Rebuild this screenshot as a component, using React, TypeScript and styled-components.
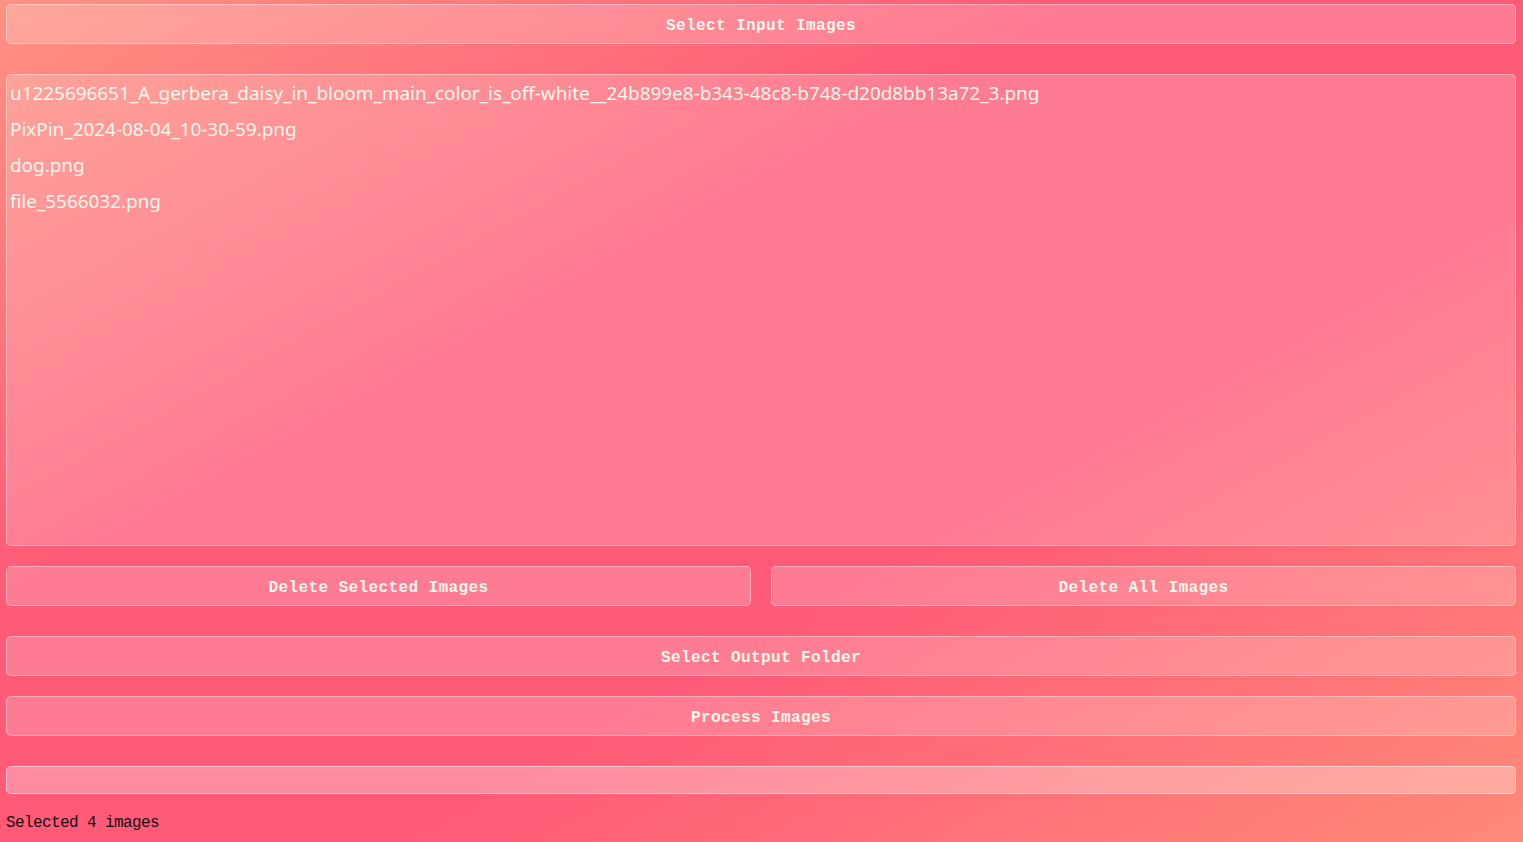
import React from "react";
import styled, { createGlobalStyle } from "styled-components";

const GlobalStyle = createGlobalStyle`
  html, body {
    margin: 0;
    padding: 0;
    height: 100%;
  }
  body {
    background: linear-gradient(
      to bottom right,
      #ff9282 0%,
      #ff5a78 36%,
      #ff5a78 62%,
      #ff8a78 100%
    );
    background-attachment: fixed;
    min-height: 842px;
    overflow: hidden;
  }
`;

const Page = styled.div`
  display: flex;
  flex-direction: column;
  padding: 4px 7px 0 6px;
  height: 842px;
  box-sizing: border-box;
`;

const Glass = `
  background: rgba(255, 255, 255, 0.2);
  border: 1px solid rgba(255, 255, 255, 0.38);
  border-radius: 5px;
  box-sizing: border-box;
`;

const ActionButton = styled.button<{ $mt?: number }>`
  ${Glass}
  height: 40px;
  width: 100%;
  margin-top: ${(p) => p.$mt ?? 0}px;
  display: flex;
  align-items: center;
  justify-content: center;
  padding: 3px 0 0 0;
  font-family: "Liberation Mono", "DejaVu Sans Mono", monospace;
  font-weight: bold;
  font-size: 16px;
  letter-spacing: 0.4px;
  color: #fff8ec;
  cursor: pointer;
`;

const ButtonRow = styled.div`
  display: grid;
  grid-template-columns: 1fr 1fr;
  gap: 20px;
  margin-top: 20px;
`;

const FileList = styled.ul`
  ${Glass}
  list-style: none;
  margin: 30px 0 0 0;
  padding: 0 0 0 3px;
  height: 472px;
  overflow: hidden;
`;

const FileItem = styled.li`
  font-family: "Noto Sans", "Open Sans", sans-serif;
  font-size: 18.9px;
  color: #fff8ec;
  height: 36px;
  line-height: 36px;
  white-space: nowrap;
`;

const Progress = styled.div`
  background: rgba(255, 255, 255, 0.3);
  border: 1px solid rgba(255, 255, 255, 0.5);
  border-radius: 5px;
  height: 28px;
  margin-top: 30px;
  box-sizing: border-box;
`;

const Status = styled.div`
  margin-top: 20px;
  font-family: "Liberation Mono", "DejaVu Sans Mono", monospace;
  font-size: 16px;
  letter-spacing: -0.6px;
  color: #1a0a10;
`;

const files = [
  "u1225696651_A_gerbera_daisy_in_bloom_main_color_is_off-white__24b899e8-b343-48c8-b748-d20d8bb13a72_3.png",
  "PixPin_2024-08-04_10-30-59.png",
  "dog.png",
  "file_5566032.png",
];

export default function App() {
  return (
    <>
      <GlobalStyle />
      <Page>
        <ActionButton>Select Input Images</ActionButton>
        <FileList>
          {files.map((f) => (
            <FileItem key={f}>{f}</FileItem>
          ))}
        </FileList>
        <ButtonRow>
          <ActionButton>Delete Selected Images</ActionButton>
          <ActionButton>Delete All Images</ActionButton>
        </ButtonRow>
        <ActionButton $mt={30}>Select Output Folder</ActionButton>
        <ActionButton $mt={20}>Process Images</ActionButton>
        <Progress />
        <Status>Selected 4 images</Status>
      </Page>
    </>
  );
}
